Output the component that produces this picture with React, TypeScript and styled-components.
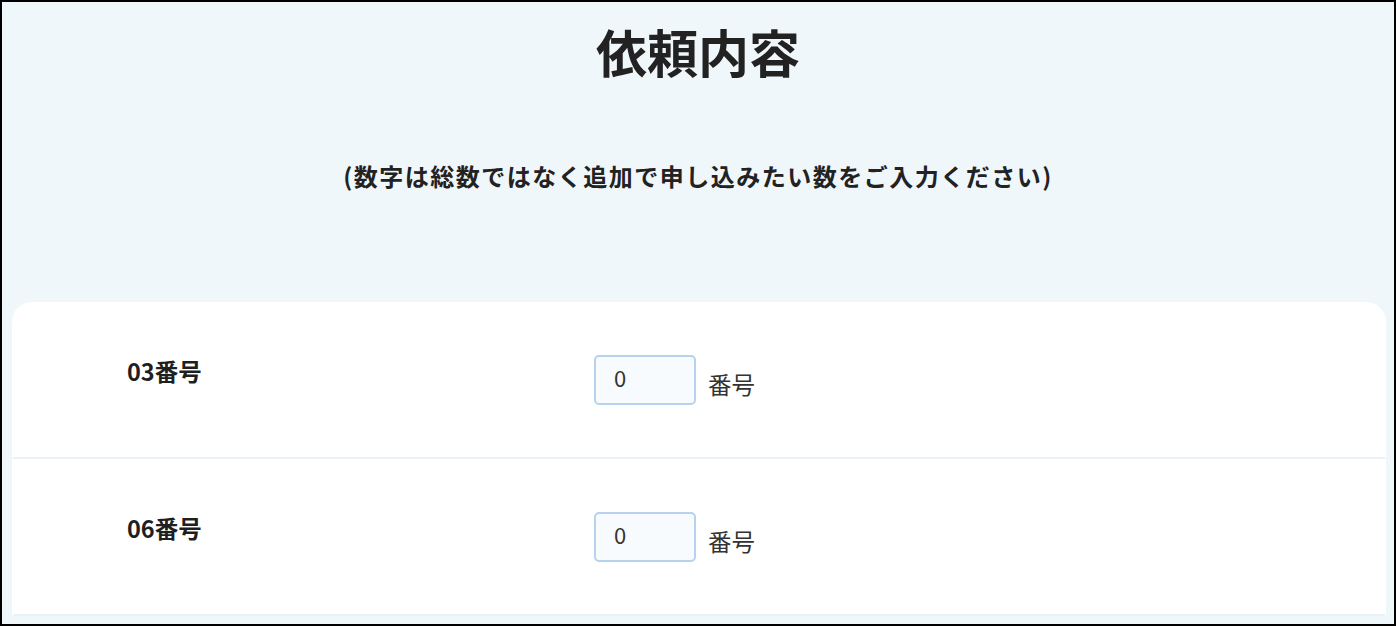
import React from 'react';
import styled, { createGlobalStyle } from 'styled-components';

const GlobalStyle = createGlobalStyle`
  html, body {
    margin: 0;
    padding: 0;
  }
  body {
    font-family: "Noto Sans CJK JP", "Noto Sans", sans-serif;
    color: #1f1f1f;
  }
`;

const Frame = styled.div`
  box-sizing: border-box;
  width: 1396px;
  height: 626px;
  border: 2px solid #000;
  background-color: #f0f7fa;
  overflow: hidden;
`;

const Header = styled.header`
  display: flex;
  flex-direction: column;
  align-items: center;
  padding-top: 18px;
  height: 300px;
  box-sizing: border-box;
`;

const Title = styled.h1`
  margin: 0;
  font-size: 51px;
  line-height: 62px;
  font-weight: 700;
  color: #222;
`;

const Note = styled.p`
  margin: 76px 0 0;
  font-size: 24px;
  line-height: 36px;
  font-weight: 700;
  letter-spacing: 1.5px;
  color: #222;
`;

const Card = styled.section`
  margin: 0 8px 0 10px;
  background: #fff;
  border-radius: 20px 20px 0 0;
  padding: 0 1px;
`;

const Row = styled.div`
  display: grid;
  grid-template-columns: 467px auto;
  padding: 53px 0 52px 114px;
  border-bottom: 2px solid #e9f1f8;
`;

const Label = styled.div`
  font-size: 23.5px;
  line-height: 32px;
  font-weight: 700;
  color: #1f1f1f;
`;

const Field = styled.div`
  display: flex;
  align-items: center;
  gap: 12px;
`;

const NumberInput = styled.input`
  box-sizing: border-box;
  width: 102px;
  height: 50px;
  padding: 0 0 6px 18px;
  border: 2px solid #b6d2ee;
  border-radius: 5px;
  background: #f7fbfd;
  font-family: inherit;
  font-size: 22px;
  color: #333;
  outline: none;
`;

const Unit = styled.span`
  font-size: 23.5px;
  line-height: 32px;
  padding-top: 8px;
  color: #333;
`;

const items = ['03番号', '06番号'];

const App: React.FC = () => {
  return (
    <>
      <GlobalStyle />
      <Frame>
        <Header>
          <Title>依頼内容</Title>
          <Note>(数字は総数ではなく追加で申し込みたい数をご入力ください)</Note>
        </Header>
        <Card>
          {items.map((label) => (
            <Row key={label}>
              <Label>{label}</Label>
              <Field>
                <NumberInput type="text" defaultValue="0" />
                <Unit>番号</Unit>
              </Field>
            </Row>
          ))}
        </Card>
      </Frame>
    </>
  );
};

export default App;
